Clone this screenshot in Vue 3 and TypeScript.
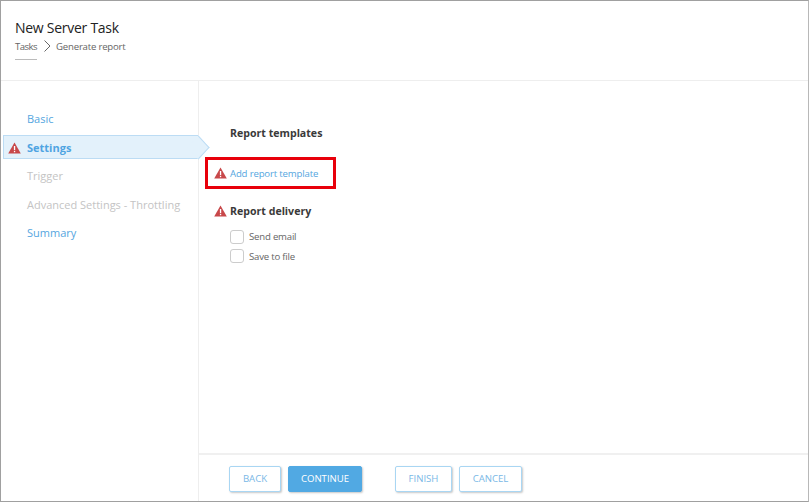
<script setup lang="ts">
interface Step { label: string; state: 'link' | 'active' | 'off' }
const steps: Step[] = [
  { label: 'Basic', state: 'link' },
  { label: 'Settings', state: 'active' },
  { label: 'Trigger', state: 'off' },
  { label: 'Advanced Settings - Throttling', state: 'off' },
  { label: 'Summary', state: 'link' },
]
</script>

<template>
  <div class="window">
    <header class="head">
      <h1>New Server Task</h1>
      <div class="crumbs">
        <span class="crumb-root">Tasks</span>
        <svg class="chev" width="8" height="14" viewBox="0 0 8 14"><path d="M1.5 1.5 L7 7 L1.5 12.5" fill="none" stroke="#666" stroke-width="1"/></svg>
        <span>Generate report</span>
      </div>
    </header>
    <div class="body">
      <nav class="side">
        <div v-for="s in steps" :key="s.label" class="step" :class="s.state">
          <svg v-if="s.state === 'active'" class="warn" width="13" height="12" viewBox="0 0 13 12"><path d="M6.5 0.5 L12.8 11.5 L0.2 11.5 Z" fill="#c8484a"/><rect x="5.9" y="4" width="1.3" height="4" fill="#fff"/><rect x="5.9" y="8.8" width="1.3" height="1.4" fill="#fff"/></svg>
          <span>{{ s.label }}</span>
        </div>
      </nav>
      <main class="main">
        <div class="content">
          <h2 class="title">Report templates</h2>
          <div class="add">
            <svg width="13" height="12" viewBox="0 0 13 12"><path d="M6.5 0.5 L12.8 11.5 L0.2 11.5 Z" fill="#c8484a"/><rect x="5.9" y="4" width="1.3" height="4" fill="#fff"/><rect x="5.9" y="8.8" width="1.3" height="1.4" fill="#fff"/></svg>
            <a>Add report template</a>
          </div>
          <div class="delivery">
            <svg width="13" height="12" viewBox="0 0 13 12"><path d="M6.5 0.5 L12.8 11.5 L0.2 11.5 Z" fill="#c8484a"/><rect x="5.9" y="4" width="1.3" height="4" fill="#fff"/><rect x="5.9" y="8.8" width="1.3" height="1.4" fill="#fff"/></svg>
            <h2>Report delivery</h2>
          </div>
          <label class="check"><i></i>Send email</label>
          <label class="check"><i></i>Save to file</label>
        </div>
        <footer class="foot">
          <button class="btn back">BACK</button>
          <button class="btn primary">CONTINUE</button>
          <button class="btn finish">FINISH</button>
          <button class="btn cancel">CANCEL</button>
        </footer>
      </main>
    </div>
  </div>
</template>

<style>
html, body { margin: 0; padding: 0; background: #fff; }
</style>

<style scoped>
.window {
  box-sizing: border-box;
  width: 809px;
  height: 502px;
  border: 1px solid #a0a0a0;
  border-right-color: #b8b8b8;
  display: flex;
  flex-direction: column;
  font-family: "Open Sans", "Noto Sans", sans-serif;
  background: #fff;
  color: #444;
  overflow: hidden;
}
.head {
  height: 80px;
  flex: none;
  box-sizing: border-box;
  border-bottom: 1px solid #eee;
  padding: 17px 0 0 14px;
}
h1 {
  margin: 0;
  font-size: 14px;
  font-weight: 400;
  letter-spacing: -0.27px;
  line-height: 20px;
  color: #222;
}
.crumbs {
  display: flex;
  align-items: center;
  gap: 5.5px;
  margin-top: 1px;
  height: 14px;
  font-size: 9.6px;
  letter-spacing: -0.2px;
  color: #666;
}
.crumb-root {
  position: relative;
  letter-spacing: -0.55px;
}
.crumb-root::after {
  content: "";
  position: absolute;
  left: 0;
  right: 0;
  top: 19px;
  height: 1px;
  background: #bbb;
}
.body {
  flex: 1;
  display: flex;
  min-height: 0;
}
.side {
  width: 198px;
  flex: none;
  box-sizing: border-box;
  border-right: 1px solid #eee;
  padding-top: 25.6px;
  display: flex;
  flex-direction: column;
  gap: 4.5px;
}
.step {
  height: 24px;
  flex: none;
  display: flex;
  align-items: center;
  padding-left: 26px;
  font-size: 11px;
  white-space: nowrap;
}
.step.link { color: #55a6e0; }
.step.off { color: #c4c4c4; }
.step.active {
  position: relative;
  margin-left: 2px;
  width: 195px;
  box-sizing: border-box;
  padding-left: 23px;
  background: #e3f1fb;
  border: 1px solid #bcdcf4;
  border-right: none;
  color: #4fa4e2;
  font-weight: 700;
}
.step.active::after {
  content: "";
  position: absolute;
  right: -8.5px;
  top: 2.5px;
  width: 17px;
  height: 17px;
  box-sizing: border-box;
  background: #e3f1fb;
  border-top: 1px solid #bcdcf4;
  border-right: 1px solid #bcdcf4;
  transform: scaleX(0.92) rotate(45deg);
}
.warn {
  position: absolute;
  left: 4px;
  top: 6px;
}
.main {
  flex: 1;
  display: flex;
  flex-direction: column;
  min-width: 0;
}
.content {
  flex: 1;
  padding: 44px 0 0 31px;
  position: relative;
}
h2 {
  margin: 0;
  font-size: 10.6px;
  font-weight: 700;
  color: #3a3a3a;
  line-height: 16px;
}
.add {
  position: relative;
  display: flex;
  align-items: center;
  height: 32px;
  margin: 16px 0 0 -16px;
  gap: 3px;
  font-size: 9.6px;
  letter-spacing: -0.16px;
  color: #55a6e0;
}
.add::before {
  content: "";
  position: absolute;
  left: -9px;
  top: 0;
  width: 125px;
  height: 26px;
  border: 3px solid #e8000b;
  box-sizing: content-box;
}
.delivery {
  display: flex;
  align-items: center;
  gap: 3px;
  margin: 14px 0 0 -16px;
  height: 16px;
}
.check {
  display: flex;
  align-items: center;
  height: 19.5px;
  font-size: 9.6px;
  letter-spacing: -0.2px;
  color: #666;
  gap: 5px;
}
.delivery + .check { margin-top: 8px; }
.check i {
  display: block;
  width: 12px;
  height: 12px;
  border: 1px solid #ccc;
  border-radius: 3px;
  background: #fff;
}
.foot {
  height: 48px;
  flex: none;
  box-sizing: border-box;
  border-top: 2px solid #f0f0f0;
  padding: 11px 0 0 30px;
  display: flex;
  align-items: flex-start;
}
.btn {
  height: 26px;
  box-sizing: border-box;
  border: 1px solid #a9d6f3;
  border-radius: 2px;
  background: #fff;
  color: #7ab8e6;
  font-family: inherit;
  font-size: 9.6px;
  padding: 0 0 2px;
  box-shadow: 1px 1px 2px rgba(0, 0, 0, 0.22);
}
.back { width: 52px; }
.primary {
  width: 74px;
  margin-left: 7px;
  background: #51a9e3;
  border-color: #51a9e3;
  color: #fff;
}
.finish { width: 57px; margin-left: 33px; }
.cancel { width: 63px; margin-left: 7px; }
</style>
